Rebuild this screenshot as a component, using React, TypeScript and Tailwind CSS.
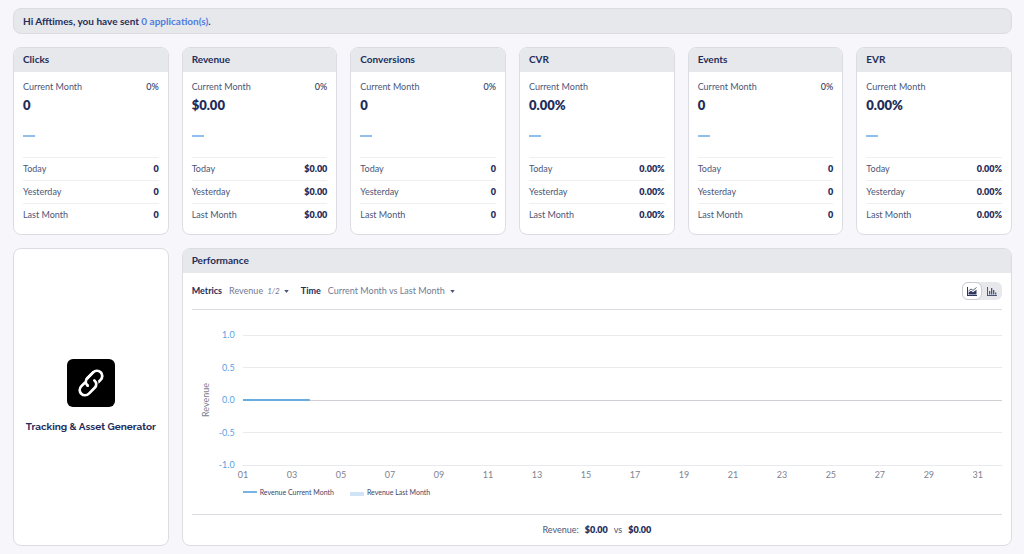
import React, { useState } from 'react';

interface Metric {
    name: string;
    current: string;
    change?: string;
    today: string;
    yesterday: string;
    lastMonth: string;
}

const metrics: Metric[] = [
    { name: 'Clicks', current: '0', change: '0%', today: '0', yesterday: '0', lastMonth: '0' },
    { name: 'Revenue', current: '$0.00', change: '0%', today: '$0.00', yesterday: '$0.00', lastMonth: '$0.00' },
    { name: 'Conversions', current: '0', change: '0%', today: '0', yesterday: '0', lastMonth: '0' },
    { name: 'CVR', current: '0.00%', today: '0.00%', yesterday: '0.00%', lastMonth: '0.00%' },
    { name: 'Events', current: '0', change: '0%', today: '0', yesterday: '0', lastMonth: '0' },
    { name: 'EVR', current: '0.00%', today: '0.00%', yesterday: '0.00%', lastMonth: '0.00%' },
];

const yTicks = ['1.0', '0.5', '0.0', '-0.5', '-1.0'];
const days = ['01', '03', '05', '07', '09', '11', '13', '15', '17', '19', '21', '23', '25', '27', '29', '31'];

const CardTitle: React.FC<{ children: React.ReactNode }> = ({ children }) => (
    <h2 className="bg-[#e7e8ec] px-[9px] pb-[2px] text-[10px] leading-[22px] font-bold">{children}</h2>
);

const MetricCard: React.FC<{ metric: Metric }> = ({ metric }) => {
    const rows = [
        ['Today', metric.today],
        ['Yesterday', metric.yesterday],
        ['Last Month', metric.lastMonth],
    ];

    return (
        <section className="overflow-hidden rounded-lg border border-[#dcdde3] bg-white">
            <CardTitle>{metric.name}</CardTitle>
            <div className="px-[9px] pt-[7px] pb-2">
                <div className="flex justify-between leading-4">
                    <span className="text-[#4b5678]">Current Month</span>
                    {metric.change && <span className="font-medium text-[#323c64]">{metric.change}</span>}
                </div>
                <p className="text-[13px] leading-5 font-extrabold">{metric.current}</p>
                <div className="my-5 h-[2px] w-3 bg-[#90bfec]" />
                <table className="w-full">
                    <tbody>
                        {rows.map(([label, value]) => (
                            <tr key={label} className="border-t border-[#eeeff2] leading-[22px]">
                                <th scope="row" className="text-left font-normal text-[#4b5678]">{label}</th>
                                <td className="text-right font-extrabold">{value}</td>
                            </tr>
                        ))}
                    </tbody>
                </table>
            </div>
        </section>
    );
};

const Caret = () => (
    <svg viewBox="0 0 6 4" className="h-[3px] w-[5px] fill-[#4b5678]">
        <path d="M0 0h6L3 4z" />
    </svg>
);

const PerformanceChart = () => (
    <div className="flex pt-[25px] pl-[7px]">
        <div className="flex h-[130px] w-[14px] items-center justify-center text-[#7d8291]">
            <span className="rotate-180 [writing-mode:vertical-rl]">Revenue</span>
        </div>
        <div className="-my-[6px] flex h-[142px] w-[22px] flex-col justify-between text-right leading-3 text-[#5b9fe3]">
            {yTicks.map((tick) => <span key={tick}>{tick}</span>)}
        </div>
        <div className="ml-2 min-w-0 flex-1">
            <svg className="block h-[148px] w-full overflow-visible" role="img" aria-label="Revenue by day">
                {yTicks.map((tick, i) => (
                    <line
                        key={tick}
                        x1="0"
                        x2="100%"
                        y1={i * 32.5}
                        y2={i * 32.5}
                        shapeRendering="crispEdges"
                        stroke={tick === '0.0' ? '#cfd1d6' : '#e9eaed'}
                    />
                ))}
                <line x1="0" x2="8.8%" y1="65" y2="65" stroke="#69acdf" strokeWidth="2" />
                {days.map((day, i) => (
                    <text key={day} x={`${(i * 200) / 31}%`} y="143" textAnchor="middle" className="fill-[#7d8291]">
                        {day}
                    </text>
                ))}
            </svg>
            <div className="flex gap-4 pt-[3px] text-[7px] leading-3 text-[#3c4668]">
                <span className="flex items-center gap-[3px]">
                    <span className="h-[2px] w-[14px] bg-[#7ab3e2]" />
                    Revenue Current Month
                </span>
                <span className="flex items-center gap-[3px]">
                    <span className="mt-[3px] h-1 w-[14px] bg-[#cfe5f7]" />
                    Revenue Last Month
                </span>
            </div>
        </div>
    </div>
);

export default function App() {
    const [chartType, setChartType] = useState<'area' | 'bar'>('area');

    return (
        <main className="min-h-screen bg-[#f7f7fb] py-2 pr-3 pl-[13px] font-['Lato',sans-serif] text-[9px] text-[#1f2d5a]">
            <div className="rounded-lg border border-[#dcdde3] bg-[#e7e8ec] px-[9px] text-[10px] leading-6 font-bold">
                Hi Afftimes, you have sent <a href="#applications" className="text-[#4f7ce0]">0 application(s)</a>.
            </div>

            <div className="mt-[13px] grid grid-cols-6 gap-[13px]">
                {metrics.map((metric) => <MetricCard key={metric.name} metric={metric} />)}

                <a
                    href="#generator"
                    className="flex flex-col items-center justify-center gap-3 rounded-lg border border-[#dcdde3] bg-white"
                >
                    <span className="flex size-12 items-center justify-center rounded-md bg-black">
                        <svg viewBox="0 0 28 28" fill="none" stroke="white" strokeWidth="2.7" strokeLinecap="round" className="size-7">
                            <path d="M10.6 16.6c-2.4-2.1-2.5-5.2-.3-7.4l5.8-5.8c2.2-2.2 5.5-2.2 7.6-.1s2.1 5.4-.1 7.6l-4.8 4.8" />
                            <path d="M17.4 11.4c2.4 2.1 2.5 5.2.3 7.4l-5.8 5.8c-2.2 2.2-5.5 2.2-7.6.1s-2.1-5.4.1-7.6l4.8-4.8" stroke="black" strokeWidth="5" />
                            <path d="M17.4 11.4c2.4 2.1 2.5 5.2.3 7.4l-5.8 5.8c-2.2 2.2-5.5 2.2-7.6.1s-2.1-5.4.1-7.6l3.4-3.4" />
                            <path d="M10.6 16.6c-2.4-2.1-2.5-5.2-.3-7.4l5.8-5.8" />
                        </svg>
                    </span>
                    <span className="font-['Raleway','Inter',sans-serif] text-[10px] leading-4 font-bold whitespace-nowrap">
                        Tracking &amp; Asset Generator
                    </span>
                </a>

                <section className="col-span-5 overflow-hidden rounded-lg border border-[#dcdde3] bg-white">
                    <CardTitle>Performance</CardTitle>
                    <div className="px-[9px]">
                        <div className="flex h-[37px] items-center border-b border-[#dcdde3]">
                            <span id="metrics-label" className="font-bold">Metrics</span>
                            <button
                                type="button"
                                aria-labelledby="metrics-label"
                                aria-haspopup="listbox"
                                className="ml-[7px] flex items-center text-[#737a92]"
                            >
                                Revenue
                                <i className="mr-1 ml-1 text-[8px]">1/2</i>
                                <Caret />
                            </button>
                            <label htmlFor="time-range" className="ml-3 font-bold">Time</label>
                            <select id="time-range" className="ml-[7px] appearance-none pr-1 text-[#737a92]">
                                <option>Current Month vs Last Month</option>
                            </select>
                            <Caret />

                            <div className="ml-auto flex h-[18px] rounded-md bg-[#e7e8ec]">
                                <button
                                    type="button"
                                    aria-label="Area chart"
                                    onClick={() => setChartType('area')}
                                    className={`flex w-5 items-center justify-center rounded-md ${chartType === 'area' ? 'border border-[#c9cbd4] bg-white' : ''}`}
                                >
                                    <svg viewBox="0 0 10 9" className="h-[9px] w-[10px]" fill="#2c3860">
                                        <path d="M0 0h1v8h9v1H0z" />
                                        <path d="M1.5 7.5V5.5L4 3.8l2 1.4 3.5-2.4v4.7z" />
                                        <path d="M1.5 4L4 2l2 1.4L9.5.5" fill="none" stroke="#2c3860" strokeWidth=".8" />
                                    </svg>
                                </button>
                                <button
                                    type="button"
                                    aria-label="Bar chart"
                                    onClick={() => setChartType('bar')}
                                    className={`flex w-5 items-center justify-center rounded-md ${chartType === 'bar' ? 'border border-[#c9cbd4] bg-white' : ''}`}
                                >
                                    <svg viewBox="0 0 10 9" className="h-[9px] w-[10px]" fill="#4b5678">
                                        <path d="M0 0h1v8h9v1H0zM2 4h1.3v3.5H2zM4 1h1.3v6.5H4zM6 3h1.3v4.5H6zM8 5.5h1.3v2H8z" />
                                    </svg>
                                </button>
                            </div>
                        </div>

                        <PerformanceChart />

                        <div className="mt-4 flex justify-center gap-[6px] border-t border-[#dcdde3] text-[#4b5678] leading-[30px]">
                            <span>Revenue:</span>
                            <b className="font-extrabold text-[#1f2d5a]">$0.00</b>
                            <span>vs</span>
                            <b className="font-extrabold text-[#1f2d5a]">$0.00</b>
                        </div>
                    </div>
                </section>
            </div>
        </main>
    );
}
